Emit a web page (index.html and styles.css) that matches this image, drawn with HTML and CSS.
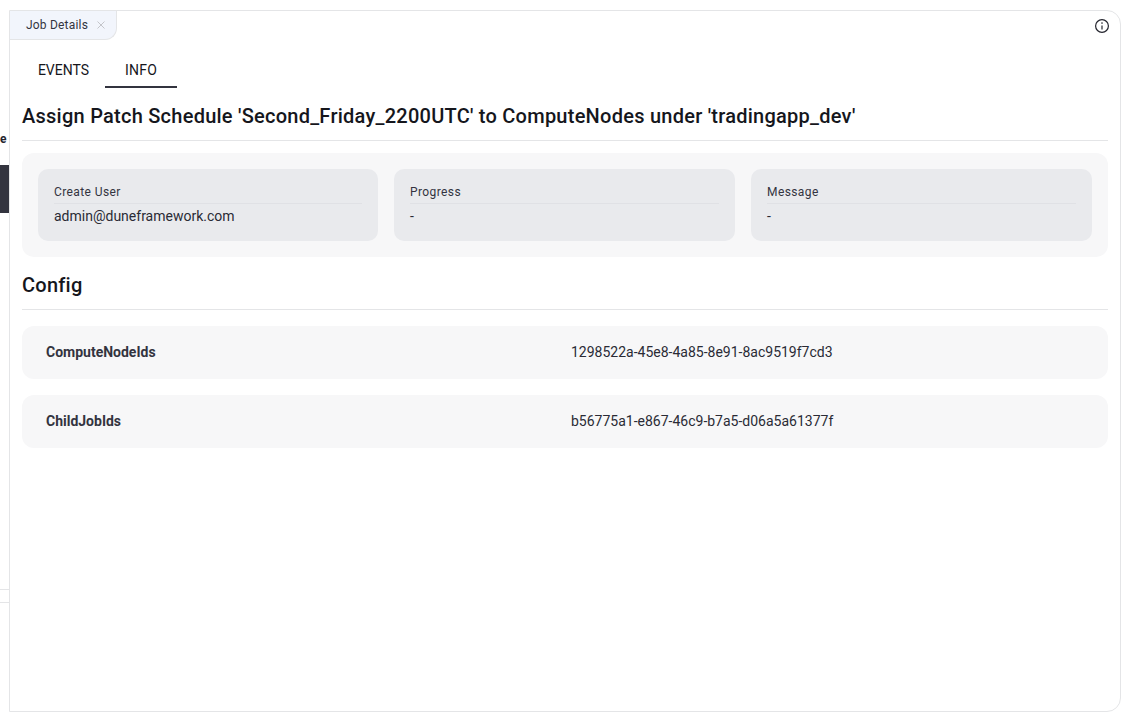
FILE: index.html
```html
<!DOCTYPE html>
<html lang="en">
<head>
  <meta charset="UTF-8" />
  <title>Job Details</title>
  <link rel="stylesheet" href="styles.css">
</head>
<body>
  <aside class="side">
    <div class="side-label">e</div>
    <div class="side-btn"></div>
    <div class="side-rows"></div>
  </aside>

  <main class="panel">
    <div class="panel-top">
      <div class="doc-tab">
        <span>Job Details</span>
        <svg class="tab-close" width="8" height="8" viewBox="0 0 8 8"><path d="M.5.5l7 7M7.5.5l-7 7"/></svg>
      </div>
      <svg class="info-icon" width="16" height="16" viewBox="0 0 16 16">
        <circle cx="8" cy="8" r="6.4"/>
        <path d="M8 7.4v4"/>
        <circle class="dot" cx="8" cy="5.1" r=".8"/>
      </svg>
    </div>

    <nav class="tabs">
      <button class="tab-events">EVENTS</button>
      <button class="tab-info active">INFO</button>
    </nav>

    <section class="content">
      <h2 class="title">Assign Patch Schedule 'Second_Friday_2200UTC' to ComputeNodes under 'tradingapp_dev'</h2>

      <div class="summary">
        <div class="stat">
          <div class="stat-label">Create User</div>
          <div class="stat-value">admin@duneframework.com</div>
        </div>
        <div class="stat">
          <div class="stat-label">Progress</div>
          <div class="stat-value">-</div>
        </div>
        <div class="stat">
          <div class="stat-label">Message</div>
          <div class="stat-value">-</div>
        </div>
      </div>

      <h2 class="title">Config</h2>

      <div class="config-row">
        <div class="config-key">ComputeNodeIds</div>
        <div class="config-value">1298522a-45e8-4a85-8e91-8ac9519f7cd3</div>
      </div>
      <div class="config-row">
        <div class="config-key">ChildJobIds</div>
        <div class="config-value">b56775a1-e867-46c9-b7a5-d06a5a61377f</div>
      </div>
    </section>
  </main>
</body>
</html>
```

FILE: styles.css
```css
:root {
  --line: #e4e5e7;
  --text: #15161c;
  --muted: #33343f;
  --soft: #f7f7f8;
  --card: #e9eaed;
}

* {
  box-sizing: border-box;
  margin: 0;
  padding: 0;
}

body {
  font-family: Roboto, sans-serif;
  background: #fff;
  color: var(--text);
  display: flex;
  height: 722px;
  padding: 10px 12px 10px 0;
  overflow: hidden;
}

.side {
  width: 9px;
  flex: none;
  overflow: hidden;
}

.side-label {
  padding: 121px 3px 0 0;
  font-size: 12px;
  font-weight: 700;
  line-height: 16px;
  text-align: right;
  color: #24252e;
}

.side-btn {
  height: 48px;
  margin-top: 18px;
  background: #33343f;
}

.side-rows {
  height: 14px;
  margin-top: 376px;
  border-top: 1px solid var(--line);
  border-bottom: 1px solid var(--line);
}

.panel {
  flex: 1;
  border: 1px solid var(--line);
  border-radius: 0 14px 14px 0;
  display: flex;
  flex-direction: column;
}

.panel-top {
  display: flex;
  justify-content: space-between;
  align-items: flex-start;
}

.doc-tab {
  width: 107px;
  height: 29px;
  padding-left: 16px;
  display: flex;
  align-items: center;
  gap: 9px;
  font-size: 12px;
  letter-spacing: 0.2px;
  color: #33343f;
  background: #f2f5fc;
  border-right: 1px solid var(--line);
  border-bottom: 1px solid var(--line);
  border-bottom-right-radius: 12px;
}

.tab-close path {
  stroke: #c4c5ca;
  fill: none;
}

.info-icon {
  margin: 7px 10px 0 0;
}

.info-icon circle,
.info-icon path {
  fill: none;
  stroke: #24252e;
  stroke-width: 1.2;
}

.info-icon .dot {
  fill: #24252e;
  stroke: none;
}

.tabs {
  display: flex;
  height: 48px;
  padding-left: 12px;
}

.tabs button {
  height: 48px;
  padding-top: 14px;
  background: transparent;
  border: none;
  border-bottom: 2px solid transparent;
  font-family: inherit;
  font-size: 14px;
  font-weight: 400;
  color: var(--text);
  cursor: pointer;
}

.tab-events {
  width: 83px;
}

.tab-info {
  width: 72px;
  letter-spacing: 0.2px;
}

.tabs button.active {
  border-bottom-color: #33343f;
}

.content {
  padding: 0 12px;
}

.title {
  margin-top: 4px;
  font-size: 20px;
  font-weight: 500;
  line-height: 48px;
  letter-spacing: 0.25px;
  border-bottom: 1px solid var(--line);
}

.summary {
  display: grid;
  grid-template-columns: 340px 1fr 1fr;
  gap: 16px;
  margin-top: 12px;
  padding: 16px;
  background: var(--soft);
  border-radius: 12px;
}

.stat {
  height: 72px;
  padding: 16px 16px 0;
  background: var(--card);
  border-radius: 10px;
}

.stat-label {
  font-size: 12px;
  line-height: 14px;
  letter-spacing: 0.4px;
  color: var(--muted);
  padding-bottom: 4px;
  border-bottom: 1px solid #e0e1e5;
}

.stat-value {
  font-size: 14px;
  line-height: 24px;
  color: #2a2b35;
}

.config-row {
  display: flex;
  align-items: center;
  height: 53px;
  margin-top: 16px;
  padding: 0 0 1px 24px;
  background: var(--soft);
  border-radius: 12px;
  font-size: 14px;
}

.config-key {
  width: 525px;
  font-weight: 700;
  color: var(--muted);
}

.config-value {
  color: #2a2b35;
}
```
